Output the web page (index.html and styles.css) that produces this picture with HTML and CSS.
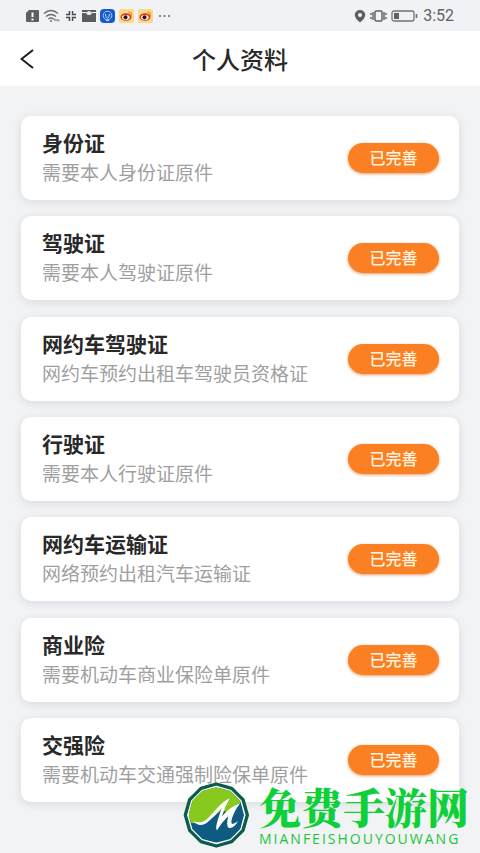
FILE: index.html
```html
<!DOCTYPE html>
<html lang="zh-CN">
<head>
<meta charset="utf-8">
<meta name="viewport" content="width=device-width, initial-scale=1">
<title>个人资料</title>
<link rel="stylesheet" href="styles.css">
</head>
<body>
<div class="status">
  <div class="status-group">
    <svg width="13" height="14" viewBox="0 0 13 14"><path d="M3 1h9q1 0 1 1v10q0 1-1 1H1q-1 0-1-1V4z" fill="#5e5f61"/><path d="M6.500 3.500v4.500M6.500 9.500v2" stroke="#fff" stroke-width="2"/></svg>
    <svg width="17" height="14" viewBox="0 0 17 14" fill="none" stroke="#6c6d6f" stroke-width="1.500"><path d="M1 4.500q7-6 14 0M3 7.500q5-4 10 0M5.500 10q2.500-2 5 0"/><circle cx="8" cy="12" r="1" fill="#6c6d6f" stroke="none"/><path d="M11 11h5M12 9.500l-1.500 1.500M15 12.500l1.500-1.500" stroke-width="1"/></svg>
    <svg class="spark" width="10" height="10" viewBox="0 0 10 10" fill="none" stroke="#46474f" stroke-width="1.400"><path d="M3.500 0v3.500H0M6.500 0v3.500H10M3.500 10V6.500H0M6.500 10V6.500H10"/></svg>
    <svg width="14" height="14" viewBox="0 0 14 14"><path d="M0 1h14v12H0z" fill="#5c5d5f"/><path d="M0 3.500h4q3 4 6 0h4" fill="none" stroke="#eee" stroke-width="1.200"/><circle cx="7" cy="4" r="2" fill="#eee"/></svg>
    <svg width="15" height="14" viewBox="0 0 15 14"><rect width="15" height="14" rx="4" fill="#1558cf"/><circle cx="7.500" cy="6.500" r="4.300" fill="none" stroke="#a9c9fa"/><path d="M5.500 5q0 3 2 4.500 2-1.500 2-4.500M6 11.500h3" fill="none" stroke="#c4dcff"/></svg>
    <svg width="15" height="14" viewBox="0 0 15 14"><rect width="15" height="14" rx="2" fill="#fbd98b"/><ellipse cx="7" cy="8" rx="5.500" ry="3.800" fill="#d83b1e"/><ellipse cx="6.800" cy="8.400" rx="3.800" ry="2.400" fill="#fff"/><circle cx="6.500" cy="8.300" r="2" fill="#34120c"/><path d="M9 3q4 0 3.500 3.500" fill="none" stroke="#ee8c26" stroke-width="1.200"/></svg>
    <svg width="15" height="14" viewBox="0 0 15 14"><rect width="15" height="14" rx="2" fill="#fbd98b"/><ellipse cx="7" cy="8" rx="5.500" ry="3.800" fill="#d83b1e"/><ellipse cx="6.800" cy="8.400" rx="3.800" ry="2.400" fill="#fff"/><circle cx="6.500" cy="8.300" r="2" fill="#34120c"/><path d="M9 3q4 0 3.500 3.500" fill="none" stroke="#ee8c26" stroke-width="1.200"/></svg>
    <svg width="14" height="14" viewBox="0 0 14 14" fill="#66676a"><circle cx="3" cy="7" r="1"/><circle cx="7.500" cy="7" r="1"/><circle cx="12" cy="7" r="1"/></svg>
  </div>
  <div class="status-group">
    <svg width="12" height="14" viewBox="0 0 12 14"><path fill-rule="evenodd" d="M6 1a5.300 5 0 0 1 5.300 5Q11 9.500 6 13.500 1 9.500.7 6A5.300 5 0 0 1 6 1zM6 4a2 2 0 1 0 0 4 2 2 0 0 0 0-4z" fill="#5e5f61"/></svg>
    <svg width="17" height="14" viewBox="0 0 17 14" fill="none" stroke="#5e5f61" stroke-width="1.400"><rect x="5" y="2" width="7" height="10" rx="1"/><path d="M3 3v8M1 4v2M1 8v2M14 3v8M16 4v2M16 8v2"/></svg>
    <svg width="27" height="14" viewBox="0 0 27 14" fill="none" stroke="#707174" stroke-width="1.300"><rect x="1" y="2" width="22" height="10" rx="2"/><rect x="3" y="4" width="5" height="6" fill="#5e5f61" stroke="none"/><path d="M25.500 5v4" stroke-width="1.600"/></svg>
    <span class="clock">3:52</span>
  </div>
</div>
<header class="header">
  <button class="back" type="button" aria-label="返回"><svg width="14" height="20" viewBox="0 0 14 20"><path d="M13 1L1.500 10 13 19" fill="none" stroke="#1c1c1c" stroke-width="2"/></svg></button>
  <h1>个人资料</h1>
</header>
<main class="list">
  <section class="card"><div class="info"><h2>身份证</h2><p>需要本人身份证原件</p></div><button class="done" type="button">已完善</button></section>
  <section class="card"><div class="info"><h2>驾驶证</h2><p>需要本人驾驶证原件</p></div><button class="done" type="button">已完善</button></section>
  <section class="card"><div class="info"><h2>网约车驾驶证</h2><p>网约车预约出租车驾驶员资格证</p></div><button class="done" type="button">已完善</button></section>
  <section class="card"><div class="info"><h2>行驶证</h2><p>需要本人行驶证原件</p></div><button class="done" type="button">已完善</button></section>
  <section class="card"><div class="info"><h2>网约车运输证</h2><p>网络预约出租汽车运输证</p></div><button class="done" type="button">已完善</button></section>
  <section class="card"><div class="info"><h2>商业险</h2><p>需要机动车商业保险单原件</p></div><button class="done" type="button">已完善</button></section>
  <section class="card"><div class="info"><h2>交强险</h2><p>需要机动车交通强制险保单原件</p></div><button class="done" type="button">已完善</button></section>
</main>
<div class="watermark">
  <svg width="67" height="66" viewBox="12 9 201 198">
    <defs><clipPath id="inner"><path d="M112 25L154 36L184 66L195 108L184 150L154 180L112 191L70 180L40 150L29 108L40 66L70 36Z"/></clipPath></defs>
    <path d="M112 15L158 28L192 62L205 108L192 154L158 188L112 201L66 188L32 154L19 108L32 62L66 28Z" fill="#fff" stroke="#0b5c4d" stroke-width="10" stroke-linejoin="round"/>
    <g clip-path="url(#inner)">
      <path d="M20 10h185v190H20z" fill="#0d5b80"/>
      <path d="M20 10H200V68Q165 72 147 100L127 94L89 126L43 133L20 128Z" fill="#88c91d"/>
    </g>
    <path d="M42 127Q64 135 82 122Q101 104 114 88Q133 67 152 58Q138 82 129 112Q153 83 184 72Q162 100 157 127Q154 143 177 127Q165 149 150 147Q140 142 148 111Q127 131 114 154Q107 149 119 115L128 87Q106 113 83 132Q61 146 42 127Z" fill="#fff"/>
  </svg>
  <div class="brand"><strong>免费手游网</strong><span>MIANFEISHOUYOUWANG</span></div>
</div>
</body>
</html>
```
FILE: styles.css
```css
* { box-sizing: border-box; }
body {
  position: relative;
  display: flex;
  flex-direction: column;
  min-height: 100vh;
  margin: 0;
  background: #f2f3f5;
  color: #292929;
  font-family: "Noto Sans CJK SC", sans-serif;
}
h1, h2, p { margin: 0; }
button { border: 0; padding: 0; font-family: inherit; }
svg { display: block; flex-shrink: 0; }
.status {
  display: flex;
  justify-content: space-between;
  align-items: center;
  height: 31px;
  padding: 0 26px;
  background: #f1f2f5;
}
.status-group { display: flex; align-items: center; gap: 4px; }
.status-group .spark { margin: 0 2px; }
.clock {
  margin-left: 1px;
  color: #626366;
  font: 16px/20px Roboto, sans-serif;
}
.header {
  display: grid;
  grid-template-columns: 40px 1fr 40px;
  align-items: center;
  height: 55px;
  padding: 0 12px;
  background: #fff;
}
.back {
  display: flex;
  align-items: center;
  justify-content: flex-start;
  height: 40px;
  padding-left: 8px;
  background: none;
}
.header h1 {
  font-size: 24px;
  font-weight: 500;
  line-height: 32px;
  text-align: center;
}
.list {
  flex: 1;
  display: flex;
  flex-direction: column;
  justify-content: space-between;
  gap: 16px;
  padding: 30px 21px 51px;
}
.card {
  display: flex;
  align-items: center;
  justify-content: space-between;
  padding: 11px 20px 13px 21px;
  border-radius: 10px;
  background: #fff;
  box-shadow: 0 2px 10px rgba(40, 45, 60, 0.12);
}
.card h2 { font-size: 21px; font-weight: 700; line-height: 30px; }
.card p { color: #9f9f9f; font-size: 19px; font-weight: 400; line-height: 30px; white-space: nowrap; }
.done {
  flex-shrink: 0;
  width: 91px;
  height: 30px;
  margin-top: 2px;
  padding-bottom: 2px;
  border-radius: 15px;
  background: #fb8023;
  box-shadow: 0 1px 3px rgba(210, 90, 0, 0.6);
  color: #fff3df;
  font-size: 16px;
  font-weight: 500;
  line-height: 28px;
}
.watermark {
  position: absolute;
  right: 11px;
  bottom: 5px;
  display: flex;
  align-items: center;
  gap: 9px;
}
.brand { display: flex; flex-direction: column; }
.brand strong {
  color: #0fd038;
  font-family: "Noto Serif CJK SC", "Noto Sans CJK SC", serif;
  font-size: 42px;
  font-weight: 900;
  line-height: 48px;
}
.brand span {
  color: #1bc53b;
  font: 500 14px/18px "Open Sans", sans-serif;
  letter-spacing: 2px;
}
```
